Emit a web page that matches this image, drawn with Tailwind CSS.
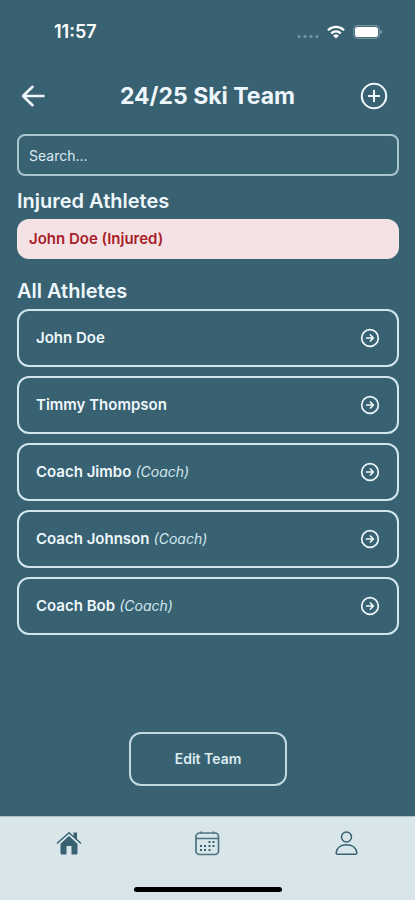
<!DOCTYPE html>
<html lang="en">
<head>
<meta charset="utf-8">
<meta name="viewport" content="width=device-width, initial-scale=1">
<title>24/25 Ski Team</title>
<script src="https://cdn.jsdelivr.net/npm/@tailwindcss/browser@4"></script>
</head>
<body class="flex min-h-screen flex-col bg-[#386172] font-['Inter','Liberation_Sans',sans-serif] text-[#eef7fb]">
<svg class="hidden" aria-hidden="true">
  <symbol id="go" viewBox="0 0 20 20" fill="none" stroke="currentColor" stroke-width="1.7" stroke-linecap="round" stroke-linejoin="round">
    <circle cx="10" cy="10" r="8.3"/><path d="M6.600 10h6.600M10.400 7l3 3-3 3"/>
  </symbol>
</svg>

<div class="flex h-16 items-center justify-between pr-8 pl-[54px]">
  <time class="text-lg font-semibold text-white">11:57</time>
  <div class="flex items-center gap-2">
    <svg class="h-4 w-[22px]" viewBox="0 0 22 16" fill="#7795a1" aria-hidden="true"><circle cx="2" cy="12.500" r="1.600"/><circle cx="8" cy="12.500" r="1.600"/><circle cx="14" cy="12.500" r="1.600"/><circle cx="20" cy="12.500" r="1.600"/></svg>
    <svg class="h-[14px] w-[18px]" viewBox="0 0 18 14" aria-hidden="true"><g fill="none" stroke="#fff" stroke-width="2.300"><path d="M1 5.200a11.400 11.400 0 0 1 16 0"/><path d="M4.200 8.400a6.800 6.800 0 0 1 9.600 0"/></g><path fill="#fff" d="M9 13.600l-2.900-2.900a4.100 4.100 0 0 1 5.800 0z"/></svg>
    <svg class="h-[14px] w-[30px]" viewBox="0 0 30 14" aria-hidden="true"><rect x=".7" y=".7" width="25.600" height="12.600" rx="4" fill="none" stroke="#7795a1" stroke-width="1.200"/><rect x="2" y="2" width="23" height="10" rx="2.800" fill="#fff"/><path d="M27.500 5v4.200c2-.6 2-3.600 0-4.200z" fill="#8da5af"/></svg>
  </div>
</div>

<header class="flex h-16 items-center justify-between pr-[27px] pl-[21px]">
  <button aria-label="Back" class="w-[34px]">
    <svg class="h-6 w-6" viewBox="0 0 24 24" fill="none" stroke="currentColor" stroke-width="2.600" stroke-linecap="round" stroke-linejoin="round"><path d="M22.500 12H2M11.500 2.800L2 12l9.500 9.200"/></svg>
  </button>
  <h1 class="text-[23px] font-bold">24/25 Ski Team</h1>
  <button aria-label="Add athlete">
    <svg class="h-7 w-7" viewBox="0 0 28 28" fill="none" stroke="currentColor" stroke-width="2.100" stroke-linecap="round"><circle cx="14" cy="14" r="12.200"/><path d="M14 8.800v10.400M8.800 14h10.400"/></svg>
  </button>
</header>

<main class="flex grow flex-col pt-1.5 pr-4 pl-[17px]">
  <input type="search" aria-label="Search" placeholder="Search..." class="h-[42px] w-full rounded-lg border-2 border-[#a9c6cf] px-2.5 text-sm outline-none placeholder:text-[#dcebf1]">
  <section class="pt-[11px]">
    <h2 class="text-xl font-semibold">Injured Athletes</h2>
    <a href="#" class="mt-1 flex h-10 items-center rounded-xl bg-[#f4e2e5] px-3 text-[15px] font-semibold text-[#a91e28]">John Doe (Injured)</a>
  </section>
  <section class="pt-[18px]">
    <h2 class="text-xl font-semibold">All Athletes</h2>
    <ul class="mt-1 flex flex-col gap-[9px] text-[15px]">
      <li><a href="#" class="flex h-[58px] items-center justify-between rounded-xl border-2 border-[#d2e7ed] px-[17px]"><span class="font-semibold">John Doe</span><svg class="h-5 w-5"><use href="#go"/></svg></a></li>
      <li><a href="#" class="flex h-[58px] items-center justify-between rounded-xl border-2 border-[#d2e7ed] px-[17px]"><span class="font-semibold">Timmy Thompson</span><svg class="h-5 w-5"><use href="#go"/></svg></a></li>
      <li><a href="#" class="flex h-[58px] items-center justify-between rounded-xl border-2 border-[#d2e7ed] px-[17px]"><span><b class="font-semibold">Coach Jimbo</b> <i class="text-sm text-[#d2e7ed]">(Coach)</i></span><svg class="h-5 w-5"><use href="#go"/></svg></a></li>
      <li><a href="#" class="flex h-[58px] items-center justify-between rounded-xl border-2 border-[#d2e7ed] px-[17px]"><span><b class="font-semibold">Coach Johnson</b> <i class="text-sm text-[#d2e7ed]">(Coach)</i></span><svg class="h-5 w-5"><use href="#go"/></svg></a></li>
      <li><a href="#" class="flex h-[58px] items-center justify-between rounded-xl border-2 border-[#d2e7ed] px-[17px]"><span><b class="font-semibold">Coach Bob</b> <i class="text-sm text-[#d2e7ed]">(Coach)</i></span><svg class="h-5 w-5"><use href="#go"/></svg></a></li>
    </ul>
  </section>
  <button class="mx-auto mt-auto mb-[30px] rounded-xl border-2 border-[#c3d9e2] px-11 py-[15px] text-sm font-semibold text-[#dcebf1]">Edit Team</button>
</main>

<footer class="border-t border-[#a9c0ca] bg-[#d8e6ea] text-[#386172]">
  <nav class="grid grid-cols-3 pt-[13px]">
    <a href="#" aria-label="Home" class="flex justify-center">
      <svg class="h-[26px] w-[26px]" viewBox="0 0 26 26"><path fill="#386172" d="M17.500 2.500h3.500v7l-3.500-3z"/><path fill="#386172" d="M4.500 13.500L13 5.500l8.500 8V23a1.500 1.500 0 0 1-1.500 1.500h-4.500V16h-5v8.500H6A1.500 1.500 0 0 1 4.500 23z"/><path d="M3.300 13.700L13 5l9.700 8.700" fill="none" stroke="#d8e6ea" stroke-width="1.300"/><path d="M1.500 13L13 2.700 24.500 13" fill="none" stroke="#386172" stroke-width="1.500" stroke-linecap="round" stroke-linejoin="round"/></svg>
    </a>
    <a href="#" aria-label="Calendar" class="flex justify-center">
      <svg class="h-[26px] w-[26px]" viewBox="0 0 26 26" fill="none" stroke="#4d7281" stroke-width="1.700"><rect x="2" y="3" width="22.500" height="21.500" rx="3.500"/><path d="M2 8.500h22.500M7 1.500v2M19.500 1.500v2"/><g fill="#386172" stroke="none"><path d="M14.500 11h2v2h-2zM18.500 11h2v2h-2z"/><path d="M6 15h2v2H6zM10 15h2v2h-2zM14.500 15h2v2h-2zM18.500 15h2v2h-2zM6 19h2v2H6zM10 19h2v2h-2zM14.500 19h2v2h-2z"/></g></svg>
    </a>
    <a href="#" aria-label="Profile" class="flex justify-center">
      <svg class="h-[26px] w-[26px]" viewBox="0 0 26 26" fill="none" stroke="#386172" stroke-width="1.500"><circle cx="13.500" cy="7" r="5"/><path d="M4.700 24.200c-1.200 0-1.700-.8-1.500-1.900.7-4.400 4.600-7.500 10.300-7.500s9.600 3.100 10.300 7.500c.2 1.100-.3 1.900-1.500 1.900z"/></svg>
    </a>
  </nav>
  <div class="mx-auto mt-[31px] mb-2 h-[5px] w-[148px] rounded-full bg-black"></div>
</footer>
</body>
</html>
